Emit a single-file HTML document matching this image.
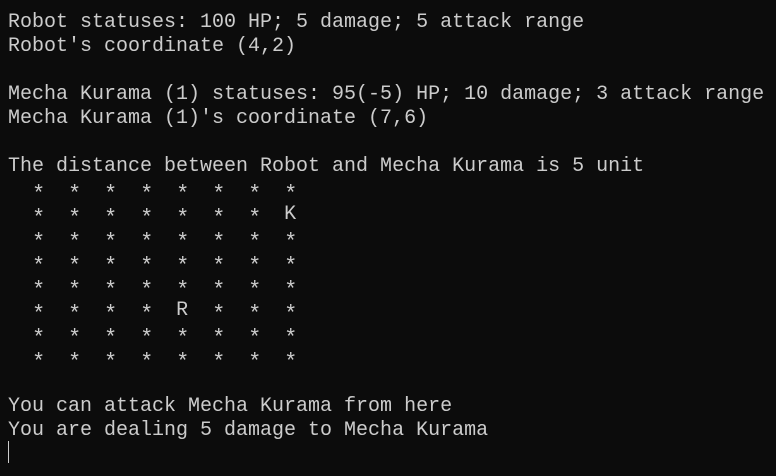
<!DOCTYPE html>
<html><head><style>
html,body{margin:0;padding:0;background:#0c0c0c;width:776px;height:476px;overflow:hidden}
pre{margin:0;position:absolute;left:8px;top:11px;font-family:"Liberation Mono",monospace;font-size:20px;line-height:24px;color:#cccccc}
s{text-decoration:none;position:relative;top:5px;font-size:22px;display:inline-block;width:12px;text-align:center;line-height:0}
.cur{position:absolute;left:8px;top:441px;width:1px;height:22px;background:#cccccc}
</style></head><body>
<pre>Robot statuses: 100 HP; 5 damage; 5 attack range
Robot's coordinate (4,2)

Mecha Kurama (1) statuses: 95(-5) HP; 10 damage; 3 attack range
Mecha Kurama (1)'s coordinate (7,6)

The distance between Robot and Mecha Kurama is 5 unit
  <s>*</s>  <s>*</s>  <s>*</s>  <s>*</s>  <s>*</s>  <s>*</s>  <s>*</s>  <s>*</s>
  <s>*</s>  <s>*</s>  <s>*</s>  <s>*</s>  <s>*</s>  <s>*</s>  <s>*</s>  K
  <s>*</s>  <s>*</s>  <s>*</s>  <s>*</s>  <s>*</s>  <s>*</s>  <s>*</s>  <s>*</s>
  <s>*</s>  <s>*</s>  <s>*</s>  <s>*</s>  <s>*</s>  <s>*</s>  <s>*</s>  <s>*</s>
  <s>*</s>  <s>*</s>  <s>*</s>  <s>*</s>  <s>*</s>  <s>*</s>  <s>*</s>  <s>*</s>
  <s>*</s>  <s>*</s>  <s>*</s>  <s>*</s>  R  <s>*</s>  <s>*</s>  <s>*</s>
  <s>*</s>  <s>*</s>  <s>*</s>  <s>*</s>  <s>*</s>  <s>*</s>  <s>*</s>  <s>*</s>
  <s>*</s>  <s>*</s>  <s>*</s>  <s>*</s>  <s>*</s>  <s>*</s>  <s>*</s>  <s>*</s>

You can attack Mecha Kurama from here
You are dealing 5 damage to Mecha Kurama</pre>
<div class="cur"></div>
</body></html>
